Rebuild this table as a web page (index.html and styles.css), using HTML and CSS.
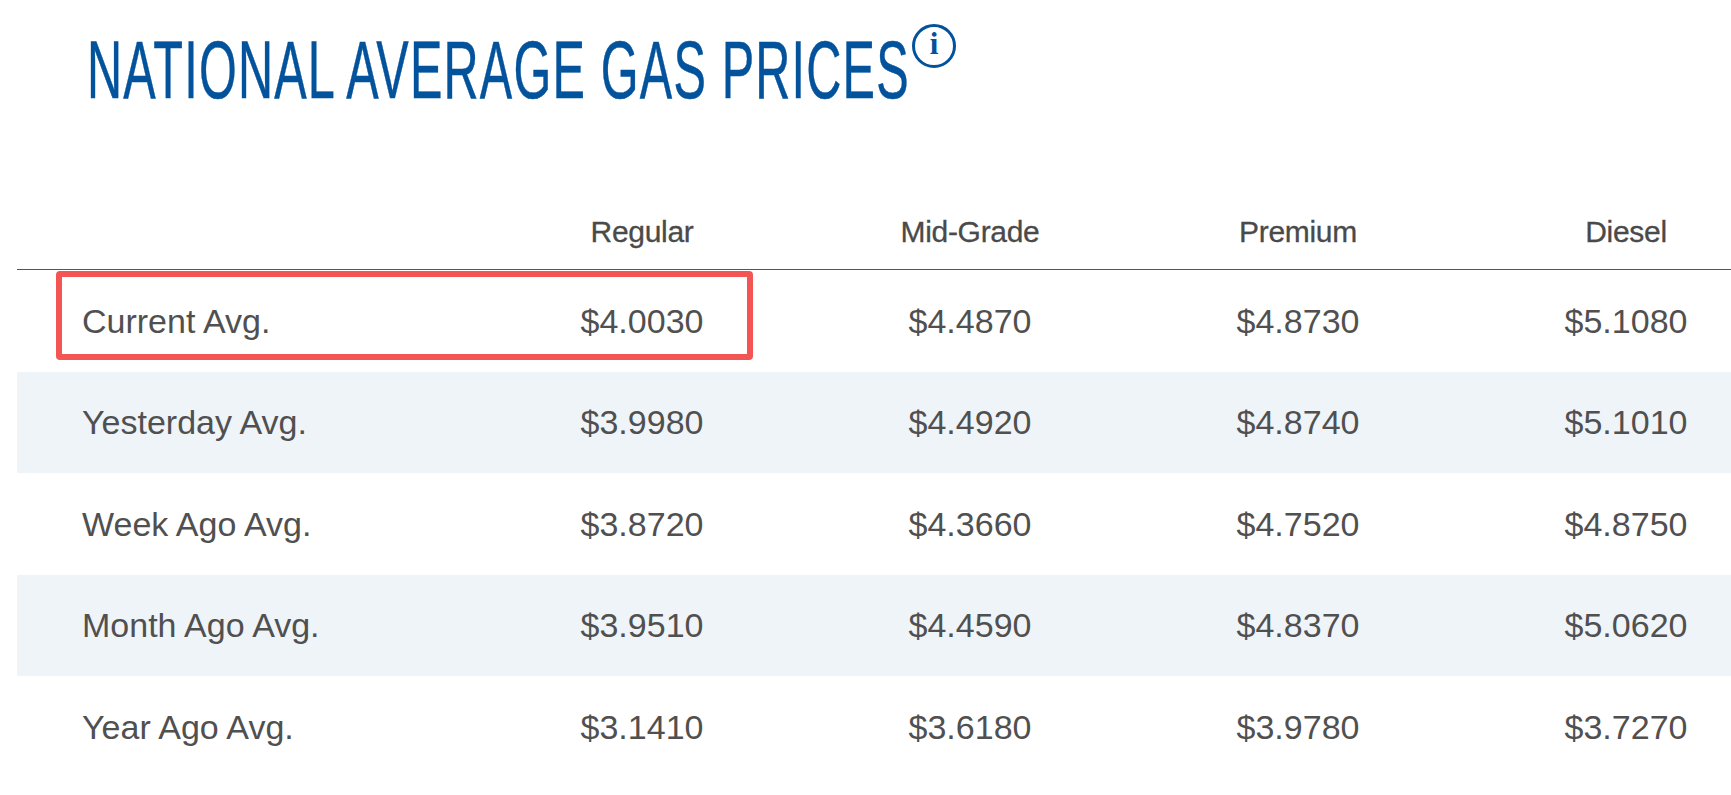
FILE: index.html
```html
<!DOCTYPE html>
<html lang="en">
<head>
<meta charset="utf-8">
<title>National Average Gas Prices</title>
<link rel="stylesheet" href="styles.css">
</head>
<body>
<main class="page">
  <h1 class="title">
    <span class="title-text">NATIONAL AVERAGE GAS PRICES</span>
    <svg class="info-icon" width="48" height="48" viewBox="0 0 48 48" aria-label="info">
      <circle cx="24" cy="24" r="20.5" fill="none" stroke="#03529c" stroke-width="3"/>
      <text x="24" y="32" text-anchor="middle" class="info-i">i</text>
    </svg>
  </h1>

  <table class="prices">
    <colgroup>
      <col class="col-label">
      <col class="col-price">
      <col class="col-price">
      <col class="col-price">
      <col class="col-price">
    </colgroup>
    <thead>
      <tr>
        <th></th>
        <th>Regular</th>
        <th>Mid-Grade</th>
        <th>Premium</th>
        <th>Diesel</th>
      </tr>
    </thead>
    <tbody>
      <tr>
        <td>Current Avg.</td>
        <td>$4.0030</td>
        <td>$4.4870</td>
        <td>$4.8730</td>
        <td>$5.1080</td>
      </tr>
      <tr>
        <td>Yesterday Avg.</td>
        <td>$3.9980</td>
        <td>$4.4920</td>
        <td>$4.8740</td>
        <td>$5.1010</td>
      </tr>
      <tr>
        <td>Week Ago Avg.</td>
        <td>$3.8720</td>
        <td>$4.3660</td>
        <td>$4.7520</td>
        <td>$4.8750</td>
      </tr>
      <tr>
        <td>Month Ago Avg.</td>
        <td>$3.9510</td>
        <td>$4.4590</td>
        <td>$4.8370</td>
        <td>$5.0620</td>
      </tr>
      <tr>
        <td>Year Ago Avg.</td>
        <td>$3.1410</td>
        <td>$3.6180</td>
        <td>$3.9780</td>
        <td>$3.7270</td>
      </tr>
    </tbody>
  </table>

  <div class="highlight"></div>
</main>
</body>
</html>
```

FILE: styles.css
```css
html, body {
  margin: 0;
  padding: 0;
  overflow: hidden;
  background: #ffffff;
}

.page {
  position: relative;
  width: 1731px;
  height: 795px;
  overflow: hidden;
  font-family: "Liberation Sans", Arial, sans-serif;
  color: #505050;
}

.title {
  position: relative;
  margin: 30px 0 0 87px;
  height: 80px;
  font-family: "Liberation Sans", Arial, sans-serif;
  font-weight: 400;
  font-size: 82px;
  line-height: 80px;
  color: #03529c;
  white-space: nowrap;
}

.title-text {
  display: inline-block;
  letter-spacing: 2px;
  transform: scaleX(0.593);
  transform-origin: left center;
  -webkit-text-stroke: 0.5px #03529c;
}

.info-icon {
  position: absolute;
  left: 823px;
  top: -8px;
}

.info-i {
  font-family: "Liberation Serif", "Times New Roman", serif;
  font-weight: 700;
  font-size: 31px;
  fill: #03529c;
}

.prices {
  margin: 107px 0 0 17px;
  width: 1772px;
  border-collapse: collapse;
  table-layout: fixed;
}

.col-label {
  width: 461px;
}

.col-price {
  width: 328px;
}

.prices th {
  padding: 0 0 22px 0;
  font-size: 30px;
  line-height: 30px;
  font-weight: 400;
  color: #4a4a4a;
  text-align: center;
  vertical-align: bottom;
  letter-spacing: -0.3px;
  -webkit-text-stroke: 0.3px #4a4a4a;
}

.prices thead tr {
  border-bottom: 1px solid #555555;
}

.prices td {
  height: 101.5px;
  padding: 0;
  font-size: 34px;
  line-height: 40px;
  text-align: center;
  vertical-align: middle;
  color: #505050;
}

.prices td:first-child {
  text-align: left;
  padding-left: 65px;
}

.prices tbody tr:nth-child(even) {
  background: #eff4f9;
}

.highlight {
  position: absolute;
  left: 56px;
  top: 271px;
  width: 697px;
  height: 89px;
  box-sizing: border-box;
  border: 6px solid #f35454;
  border-radius: 4px;
}
```
